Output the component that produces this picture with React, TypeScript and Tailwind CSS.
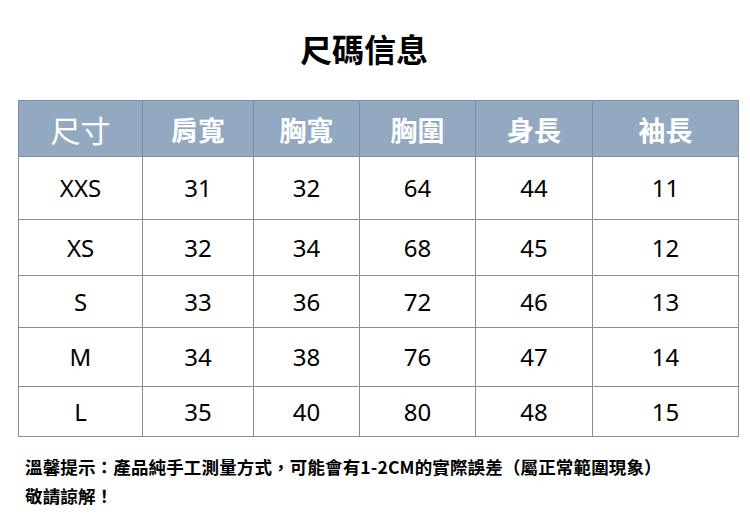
const COLS = [124, 111, 106, 116, 117, 146];

const HEADERS = ['肩寬', '胸寬', '胸圍', '身長', '袖長'];

const ROWS: { size: string; values: number[]; h: number }[] = [
  { size: 'XXS', values: [31, 32, 64, 44, 11], h: 63 },
  { size: 'XS', values: [32, 34, 68, 45, 12], h: 56 },
  { size: 'S', values: [33, 36, 72, 46, 13], h: 52 },
  { size: 'M', values: [34, 38, 76, 47, 14], h: 59 },
  { size: 'L', values: [35, 40, 80, 48, 15], h: 50 },
];

export default function App() {
  return (
    <main className="h-[532px] w-[750px] overflow-hidden bg-white font-['Noto_Sans','Noto_Sans_CJK_TC',sans-serif] text-black">
      <h1 className="mt-[29px] h-[38px] pr-[22px] text-center text-[32px] leading-[38px] font-bold font-['Noto_Sans_CJK_TC',sans-serif]">
        尺碼信息
      </h1>

      <table className="mt-[33px] ml-[18px] table-fixed border-collapse border border-[#8c8c8c]">
        <colgroup>
          {COLS.map((w, i) => (
            <col key={i} style={{ width: w }} />
          ))}
        </colgroup>
        <thead>
          <tr className="h-[56px] bg-[#93a9c1] text-white">
            <th className="border border-[#7d8da0] pt-[1px] text-center text-[30px] font-normal font-['Noto_Sans_CJK_TC',sans-serif]">
              尺寸
            </th>
            {HEADERS.map((h) => (
              <th
                key={h}
                className="border border-[#7d8da0] pt-[4px] text-center text-[27px] font-bold font-['Noto_Sans_CJK_TC',sans-serif]"
              >
                {h}
              </th>
            ))}
          </tr>
        </thead>
        <tbody>
          {ROWS.map((row) => (
            <tr key={row.size} style={{ height: row.h }}>
              <td className="border border-[#8c8c8c] text-center text-[24px] leading-none">{row.size}</td>
              {row.values.map((v, i) => (
                <td key={i} className="border border-[#8c8c8c] text-center text-[24px] leading-none">
                  {v}
                </td>
              ))}
            </tr>
          ))}
        </tbody>
      </table>

      <div className="mt-[15px] ml-[25px] text-[17.5px] leading-[29px] font-bold font-['Noto_Sans_CJK_TC',sans-serif] tracking-[0.15px]">
        <p>溫馨提示：產品純手工測量方式，可能會有1-2CM的實際誤差（屬正常範圍現象）</p>
        <p>敬請諒解！</p>
      </div>
    </main>
  );
}
